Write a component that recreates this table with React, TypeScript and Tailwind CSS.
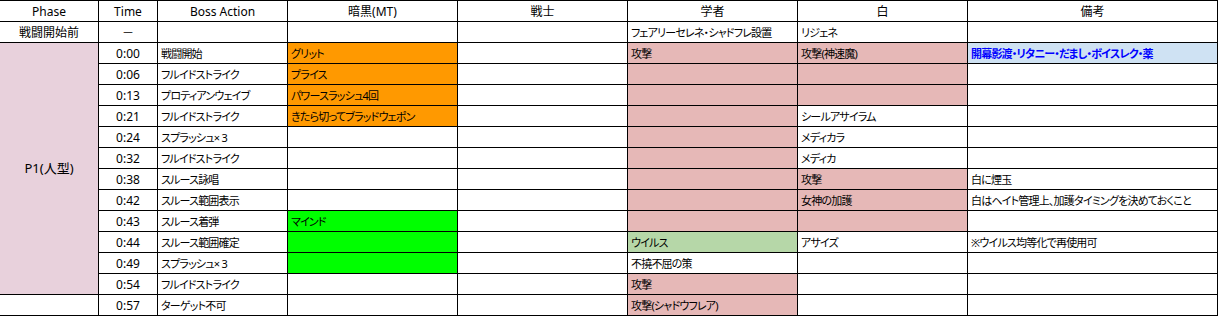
import React from 'react';

type Fill = 'orange' | 'pink' | 'green' | 'lime' | 'blue' | 'none';

const fills: Record<Fill, string> = {
  orange: 'bg-[#ff9900]',
  pink: 'bg-[#e6b8b7]',
  green: 'bg-[#00ff00]',
  lime: 'bg-[#b6d7a8]',
  blue: 'bg-[#cfe2f3] font-bold text-[#0000ff]',
  none: 'bg-white',
};

type Cell = [string, Fill?];

// time, boss action, 暗黒, 戦士, 学者, 白, 備考
const rows: { time: string; boss: string; cells: Cell[] }[] = [
  { time: '0:00', boss: '戦闘開始', cells: [['グリット', 'orange'], [''], ['攻撃', 'pink'], ['攻撃(神速魔)', 'pink'], ['開幕影渡・リタニー・だまし・ボイスレク・薬', 'blue']] },
  { time: '0:06', boss: 'フルイドストライク', cells: [['プライス', 'orange'], [''], ['', 'pink'], ['', 'pink'], ['']] },
  { time: '0:13', boss: 'プロティアンウェイブ', cells: [['パワースラッシュ4回', 'orange'], [''], ['', 'pink'], ['', 'pink'], ['']] },
  { time: '0:21', boss: 'フルイドストライク', cells: [['きたら切ってブラッドウェポン', 'orange'], [''], ['', 'pink'], ['シールアサイラム'], ['']] },
  { time: '0:24', boss: 'スプラッシュ× 3', cells: [[''], [''], ['', 'pink'], ['メディカラ'], ['']] },
  { time: '0:32', boss: 'フルイドストライク', cells: [[''], [''], ['', 'pink'], ['メディカ'], ['']] },
  { time: '0:38', boss: 'スルース詠唱', cells: [[''], [''], ['', 'pink'], ['攻撃', 'pink'], ['白に煙玉']] },
  { time: '0:42', boss: 'スルース範囲表示', cells: [[''], [''], ['', 'pink'], ['女神の加護', 'pink'], ['白はヘイト管理上、加護タイミングを決めておくこと']] },
  { time: '0:43', boss: 'スルース着弾', cells: [['マインド', 'green'], [''], ['', 'pink'], ['', 'pink'], ['']] },
  { time: '0:44', boss: 'スルース範囲確定', cells: [['', 'green'], [''], ['ウイルス', 'lime'], ['アサイズ'], ['※ウイルス均等化で再使用可']] },
  { time: '0:49', boss: 'スプラッシュ× 3', cells: [['', 'green'], [''], ['不撓不屈の策'], [''], ['']] },
  { time: '0:54', boss: 'フルイドストライク', cells: [[''], [''], ['攻撃', 'pink'], [''], ['']] },
];

const last = { time: '0:57', boss: 'ターゲット不可', cells: [[''], [''], ['攻撃(シャドウフレア)', 'pink'], [''], ['']] as Cell[] };

const headers = ['Phase', 'Time', 'Boss Action', '暗黒(MT)', '戦士', '学者', '白', '備考'];

function Left({ text, fill = 'none' }: { text: string; fill?: Fill }) {
  return (
    <div className={`flex items-center overflow-hidden whitespace-nowrap pl-[3px] pt-px text-[11px] tracking-[-0.8px] ${fills[fill]}`}>
      {text}
    </div>
  );
}

function Center({ text }: { text: string }) {
  return <div className="flex items-center justify-center whitespace-nowrap bg-white pt-px">{text}</div>;
}

export default function App() {
  return (
    <div className="h-[317px] w-[1221px] bg-white">
      <div
        className="grid w-[1218px] grid-cols-[98px_58px_129px_169px_169px_169px_169px_249px] auto-rows-[20px] gap-px bg-black pt-px pr-px pb-px text-[12px] leading-none text-black [font-family:'Noto_Sans','Noto_Sans_CJK_JP',sans-serif] [font-feature-settings:'palt']"
      >
        {headers.map((h) => (
          <Center key={h} text={h} />
        ))}

        <Center text="戦闘開始前" />
        <Center text="－" />
        <Left text="" />
        <Left text="" />
        <Left text="" />
        <Left text="フェアリーセレネ・シャドフレ設置" />
        <Left text="リジェネ" />
        <Left text="" />

        <div className="row-span-12 flex items-center justify-center bg-[#e8d1dc] text-[13px]">P1(人型)</div>
        {rows.map((r) => (
          <React.Fragment key={r.time}>
            <Center text={r.time} />
            <Left text={r.boss} />
            {r.cells.map(([t, f], i) => (
              <Left key={i} text={t} fill={f} />
            ))}
          </React.Fragment>
        ))}

        <Left text="" />
        <Center text={last.time} />
        <Left text={last.boss} />
        {last.cells.map(([t, f], i) => (
          <Left key={i} text={t} fill={f} />
        ))}
      </div>
    </div>
  );
}
